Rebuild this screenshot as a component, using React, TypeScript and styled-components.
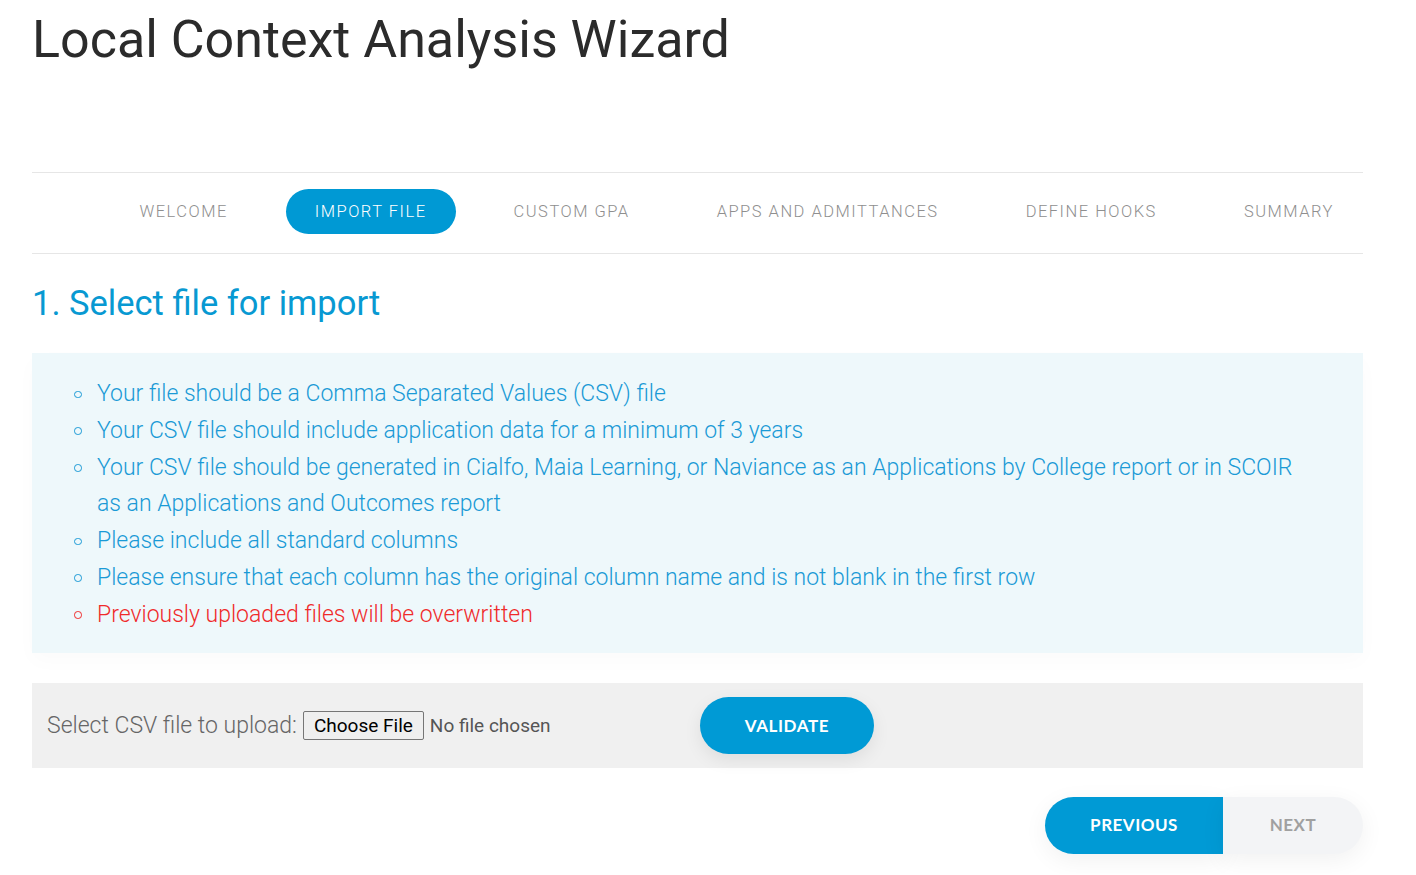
import styled, { createGlobalStyle } from "styled-components";

const GlobalStyle = createGlobalStyle`
  body {
    margin: 0;
    background: #ffffff;
    font-family: Roboto, "Liberation Sans", sans-serif;
  }
`;

const STEPS = [
  "Welcome",
  "Import File",
  "Custom GPA",
  "Apps and Admittances",
  "Define Hooks",
  "Summary",
];

const RULES = [
  "Your file should be a Comma Separated Values (CSV) file",
  "Your CSV file should include application data for a minimum of 3 years",
  "Your CSV file should be generated in Cialfo, Maia Learning, or Naviance as an Applications by College report or in SCOIR as an Applications and Outcomes report",
  "Please include all standard columns",
  "Please ensure that each column has the original column name and is not blank in the first row",
];

export default function App() {
  return (
    <>
      <GlobalStyle />
      <StyledPage>
        <StyledTitle>Local Context Analysis Wizard</StyledTitle>
        <StyledStepsNav>
          {STEPS.map((step) => (
            <StyledStep key={step} $active={step === "Import File"}>
              {step}
            </StyledStep>
          ))}
        </StyledStepsNav>
        <StyledHeading>1. Select file for import</StyledHeading>
        <StyledInfoBox>
          <StyledRuleList>
            {RULES.map((rule) => (
              <StyledRule key={rule}>{rule}</StyledRule>
            ))}
            <StyledRule $warning>Previously uploaded files will be overwritten</StyledRule>
          </StyledRuleList>
        </StyledInfoBox>
        <StyledUploadRow>
          <StyledUploadLabel>Select CSV file to upload:</StyledUploadLabel>
          <StyledFileInput type="file" accept=".csv" />
          <StyledPillButton>Validate</StyledPillButton>
        </StyledUploadRow>
        <StyledPager>
          <StyledPagerButton $side="left">Previous</StyledPagerButton>
          <StyledPagerButton $side="right">Next</StyledPagerButton>
        </StyledPager>
      </StyledPage>
    </>
  );
}

const StyledPage = styled.div`
  width: 1331px;
  padding: 0 0 20px 32px;
`;

const StyledTitle = styled.h1`
  margin: 0;
  padding-top: 10px;
  height: 162px;
  font-size: 52px;
  font-weight: 400;
  line-height: 60px;
  color: #2b2b2b;
`;

const StyledStepsNav = styled.nav`
  display: flex;
  justify-content: flex-end;
  align-items: center;
  gap: 29px;
  height: 76px;
  padding-bottom: 4px;
  border-top: 1px solid #e6e6e6;
  border-bottom: 1px solid #e6e6e6;
`;

const StyledStep = styled.div<{ $active?: boolean }>`
  height: 45px;
  padding: 0 29px;
  display: flex;
  align-items: center;
  border-radius: 23px;
  font-size: 16.5px;
  font-weight: 300;
  letter-spacing: 1.5px;
  text-transform: uppercase;
  color: ${(p) => (p.$active ? "#ffffff" : "#8f8f8f")};
  background: ${(p) => (p.$active ? "#0099d4" : "transparent")};
`;

const StyledHeading = styled.h2`
  margin: 0;
  height: 97px;
  padding-bottom: 2px;
  display: flex;
  align-items: center;
  font-size: 34.5px;
  font-weight: 400;
  color: #0899d2;
`;

const StyledInfoBox = styled.div`
  background: #eef8fb;
  padding: 23px 60px 19px 0;
  box-shadow: 0 8px 20px rgba(0, 0, 0, 0.02);
`;

const StyledRuleList = styled.ul`
  margin: 0;
  padding-left: 65px;
  list-style: none;
`;

const StyledRule = styled.li<{ $warning?: boolean }>`
  position: relative;
  font-size: 23px;
  font-weight: 300;
  line-height: 36.8px;
  color: ${(p) => (p.$warning ? "#f02a2a" : "#1a9ad6")};
  &::before {
    content: "";
    position: absolute;
    left: -23px;
    top: 14.5px;
    width: 5.5px;
    height: 5.5px;
    border: 1.6px solid currentColor;
    border-radius: 50%;
  }
`;

const StyledUploadRow = styled.div`
  margin-top: 30px;
  height: 85px;
  padding: 0 15px;
  display: flex;
  align-items: center;
  background: #f0f0f0;
`;

const StyledUploadLabel = styled.span`
  font-size: 23px;
  font-weight: 300;
  color: #666666;
  margin-right: 6px;
`;

const StyledFileInput = styled.input`
  width: 397px;
  font-family: Roboto, "Liberation Sans", sans-serif;
  font-size: 19px;
  color: #555555;
  &::file-selector-button {
    font-family: Roboto, "Liberation Sans", sans-serif;
    font-size: 19px;
    color: #000000;
    background: #efefef;
    border: 1px solid #767676;
    border-radius: 2px;
    padding: 2px 10px;
    margin-right: 6px;
  }
`;

const StyledPillButton = styled.button`
  width: 174px;
  height: 57px;
  border: none;
  border-radius: 29px;
  background: #009ad5;
  color: #ffffff;
  font-family: Lato, "Liberation Sans", sans-serif;
  font-weight: 700;
  font-size: 17px;
  letter-spacing: 0.6px;
  text-transform: uppercase;
  box-shadow: 0 6px 18px rgba(0, 0, 0, 0.08);
  cursor: pointer;
`;

const StyledPager = styled.div`
  margin-top: 29px;
  display: flex;
  justify-content: flex-end;
`;

const StyledPagerButton = styled.button<{ $side: "left" | "right" }>`
  height: 57px;
  padding-bottom: 3px;
  width: ${(p) => (p.$side === "left" ? "178px" : "140px")};
  border: none;
  border-radius: ${(p) => (p.$side === "left" ? "29px 0 0 29px" : "0 29px 29px 0")};
  background: ${(p) => (p.$side === "left" ? "#009ad5" : "#f3f4f6")};
  color: ${(p) => (p.$side === "left" ? "#ffffff" : "#a0a0a0")};
  font-family: Lato, "Liberation Sans", sans-serif;
  font-weight: 700;
  font-size: 17px;
  letter-spacing: 0.5px;
  text-transform: uppercase;
  box-shadow: 0 6px 24px rgba(0, 0, 0, 0.06);
  cursor: pointer;
`;
